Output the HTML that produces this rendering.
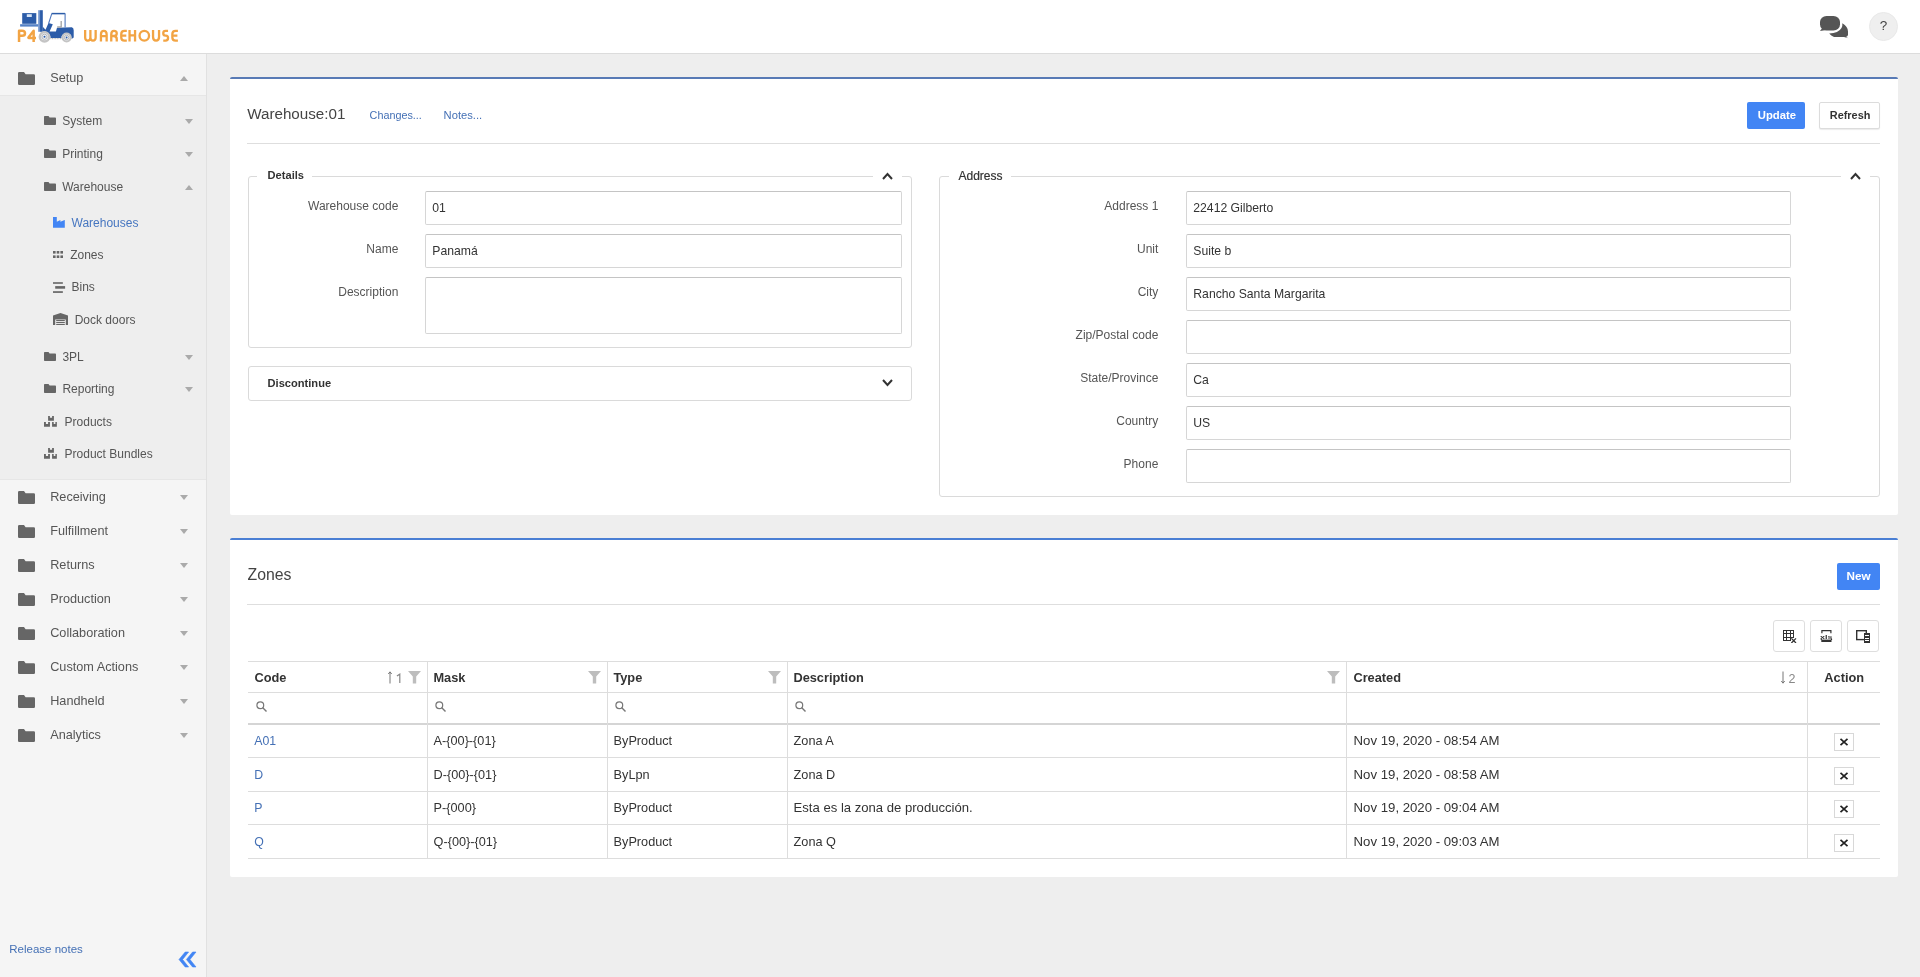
<!DOCTYPE html>
<html><head><meta charset="utf-8"><title>Warehouse</title>
<style>
*{box-sizing:border-box;margin:0;padding:0}
html,body{width:1920px;height:977px;overflow:hidden;background:#eeeeee;font-family:"Liberation Sans",sans-serif;color:#333;position:relative}
.a{position:absolute;display:block}
.t{position:absolute;white-space:nowrap;line-height:1}
</style></head><body style="will-change:transform">
<div class="a" style="left:0px;top:0px;width:1920px;height:53px;background:#fff"></div>
<div class="a" style="left:0px;top:53px;width:1920px;height:1px;background:#dcdcdc"></div>
<svg class="a" style="left:14px;top:8px;" width="170" height="40" viewBox="0 0 170 40">
<g fill="#2c5ca8">
<rect x="8.2" y="5.1" width="14.1" height="10.7"/>
<rect x="26" y="2.2" width="2.8" height="21.6"/>
<path d="M28.8 18.8 L31.5 21.8 L34.5 15.1 L38.8 16.2 L35.6 23.6 L41.9 23.6 L43 19.7 L57.8 19.2 Q59.7 19.6 59.7 22.2 L59.7 29.5 L57.6 31 L57 27 Q55 25 52.6 24.9 Q49 25 47.5 28.5 L47.5 30 L36.5 30 Q36.5 25 31.5 23.5 L28.8 23.5 Z"/>
</g>
<rect x="24.2" y="2.2" width="1.9" height="21.6" fill="#6f93cc"/>
<rect x="12.8" y="6.2" width="5" height="2.8" fill="#d6e4f6"/>
<rect x="6.1" y="16.2" width="18.1" height="2.4" fill="#5582c6"/>
<path d="M37.6 5.6 L51.2 5.6" stroke="#2c5ca8" stroke-width="1.5"/>
<path d="M37.8 5.6 L34.6 15.5 M51.1 5.6 L51.1 19.5" stroke="#4f78bd" stroke-width="1.1" fill="none"/>
<path d="M47.2 12.9 L47.2 19 L43.2 19" stroke="#a8a8a8" stroke-width="1.4" fill="none"/>
<path d="M36.4 30.6 L48.2 30.6" stroke="#c0c0c0" stroke-width="1.4" stroke-dasharray="1 0.6"/>
<circle cx="30.5" cy="28.8" r="5.9" fill="#c4c4c4"/><circle cx="30.5" cy="28.8" r="3.5" fill="#eef2f8"/><circle cx="30.5" cy="28.8" r="2.6" fill="none" stroke="#b0b0b0" stroke-width="0.9"/>
<circle cx="52.6" cy="29.5" r="5" fill="#c4c4c4"/><circle cx="52.6" cy="29.5" r="3" fill="#eef2f8"/><circle cx="52.6" cy="29.5" r="2.2" fill="none" stroke="#b0b0b0" stroke-width="0.9"/>
<circle cx="30.5" cy="28.8" r="1" fill="#2c5ca8"/><circle cx="52.6" cy="29.5" r="0.9" fill="#2c5ca8"/>
<g fill="none" stroke="#f2a444" stroke-width="2.5" stroke-linecap="butt" stroke-linejoin="round">
<path d="M5.05 34 V22.65 H8 Q11 22.65 11 25.2 Q11 27.8 8 27.8 H5.05"/>
<path d="M19.65 34 V22.65 L14.6 29.2 Q14 29.95 15 29.95 H22"/>
</g>
<g transform="translate(66,18)" fill="none" stroke="#f2a444" stroke-width="2.3" stroke-linejoin="round">
<path d="M5.15 3.95 V11.6 Q5.15 14.6 7.8 14.6 Q10.4 14.6 10.4 11.6 V3.95 M10.4 11.6 Q10.4 14.6 13 14.6 Q15.65 14.6 15.65 11.6 V3.95"/>
<path d="M20.95 15.55 V8.5 Q20.95 4.9 23.8 4.9 Q26.65 4.9 26.65 8.5 V15.55 M20.95 10.2 H26.65"/>
<path d="M31.25 15.55 V8.5 Q31.25 4.9 34 4.9 Q36.75 4.9 36.75 7.5 Q36.75 10 34 10 H31.25 M34.3 10 Q36.75 10.5 36.75 13 V15.55"/>
<path d="M46.8 4.9 H44.5 Q41.25 4.9 41.25 8 V11.5 Q41.25 14.6 44.5 14.6 H46.8 M41.25 9.7 H46.3"/>
<path d="M49.55 3.95 V15.55 M55.05 3.95 V15.55 M49.55 9.4 H55.05"/>
<ellipse cx="64.3" cy="9.75" rx="4.75" ry="4.85"/>
<path d="M73.05 3.95 V11 Q73.05 14.6 76.05 14.6 Q79.05 14.6 79.05 11 V3.95"/>
<path d="M88.05 4.9 H85.5 Q83.25 4.9 83.25 7.2 Q83.25 9.6 85.5 9.6 H86 Q88.05 9.6 88.05 12 Q88.05 14.6 85.5 14.6 H83.25"/>
<path d="M97.9 4.9 H95.6 Q92.35 4.9 92.35 8 V11.5 Q92.35 14.6 95.6 14.6 H97.9 M92.35 9.7 H97.4"/>
</g>
</svg>
<svg class="a" style="left:1819px;top:15px;" width="30" height="24" viewBox="0 0 30 24"><g fill="#555">
<rect x="1" y="1" width="20" height="14.6" rx="6.5" ry="6"/>
<path d="M1 16 L4 12 L7.5 15 Z"/>
<path d="M23.3 8.2 Q29 11.5 29 16.5 L29 20 Q28.5 21.5 27 22 L29.5 23.2 L25 22 Q23 22.2 20 22 L15 22 Q12 20.5 10.2 18.4 Q19.5 18.2 22.5 13 Q23.7 10.5 23.3 8.2 Z"/>
</g></svg>
<div class="a" style="left:1869px;top:12px;width:29px;height:29px;background:#efefef;border-radius:50%;border:1px solid #e9e9e9"></div>
<div class="t" style="left:1879.80px;top:18.97px;font-size:13.5px;color:#444;font-weight:normal;">?</div>
<div class="a" style="left:0px;top:54px;width:206px;height:923px;background:#f5f5f5"></div>
<div class="a" style="left:206px;top:54px;width:1px;height:923px;background:#e1e1e1"></div>
<div class="a" style="left:0px;top:95px;width:206px;height:1px;background:#e6e6e6"></div>
<div class="a" style="left:0px;top:96px;width:206px;height:383px;background:#eeeeee"></div>
<div class="a" style="left:0px;top:479px;width:206px;height:1px;background:#e6e6e6"></div>
<svg class="a" style="left:18px;top:72px;" width="17" height="13" viewBox="0 0 17 13"><path d="M0 1.2 Q0 0 1.2 0 L6 0 L7.6 2.2 L15.8 2.2 Q17 2.2 17 3.4 L17 11.8 Q17 13 15.8 13 L1.2 13 Q0 13 0 11.8 Z" fill="#666"/></svg>
<div class="t" style="left:50.20px;top:71.95px;font-size:12.7px;color:#555;font-weight:normal;">Setup</div>
<svg class="a" style="left:180px;top:76px;" width="8" height="5" viewBox="0 0 8 5"><path d="M0 5 L4.0 0 L8 5 Z" fill="#aaa"/></svg>
<svg class="a" style="left:44px;top:116.1px;" width="12" height="9" viewBox="0 0 12 9"><path d="M0 0.8 Q0 0 0.8 0 L4.5 0 L5.6 1.6 L11.2 1.6 Q12 1.6 12 2.4 L12 8.2 Q12 9 11.2 9 L0.8 9 Q0 9 0 8.2 Z" fill="#666"/></svg>
<div class="t" style="left:62.20px;top:114.94px;font-size:12px;color:#555;font-weight:normal;">System</div>
<svg class="a" style="left:185px;top:119.1px;" width="8" height="5" viewBox="0 0 8 5"><path d="M0 0 L8 0 L4.0 5 Z" fill="#aaa"/></svg>
<svg class="a" style="left:44px;top:149.2px;" width="12" height="9" viewBox="0 0 12 9"><path d="M0 0.8 Q0 0 0.8 0 L4.5 0 L5.6 1.6 L11.2 1.6 Q12 1.6 12 2.4 L12 8.2 Q12 9 11.2 9 L0.8 9 Q0 9 0 8.2 Z" fill="#666"/></svg>
<div class="t" style="left:62.20px;top:148.04px;font-size:12px;color:#555;font-weight:normal;">Printing</div>
<svg class="a" style="left:185px;top:152.2px;" width="8" height="5" viewBox="0 0 8 5"><path d="M0 0 L8 0 L4.0 5 Z" fill="#aaa"/></svg>
<svg class="a" style="left:44px;top:181.7px;" width="12" height="9" viewBox="0 0 12 9"><path d="M0 0.8 Q0 0 0.8 0 L4.5 0 L5.6 1.6 L11.2 1.6 Q12 1.6 12 2.4 L12 8.2 Q12 9 11.2 9 L0.8 9 Q0 9 0 8.2 Z" fill="#666"/></svg>
<div class="t" style="left:62.20px;top:180.54px;font-size:12px;color:#555;font-weight:normal;">Warehouse</div>
<svg class="a" style="left:185px;top:184.7px;" width="8" height="5" viewBox="0 0 8 5"><path d="M0 5 L4.0 0 L8 5 Z" fill="#aaa"/></svg>
<svg class="a" style="left:53px;top:217px;" width="12" height="11" viewBox="0 0 12 11"><path d="M0 0 H3.8 V4.8 L7.4 3 V4.8 L11.6 3 H11.8 V10.75 H0 Z" fill="#4285f4"/></svg>
<div class="t" style="left:71.50px;top:216.84px;font-size:12px;color:#4676c0;font-weight:normal;">Warehouses</div>
<svg class="a" style="left:53px;top:251px;" width="10" height="7" viewBox="0 0 10 7"><g fill="#666"><rect x="0" y="0" width="2.6" height="2.6"/><rect x="3.7" y="0" width="2.6" height="2.6"/><rect x="7.4" y="0" width="2.6" height="2.6"/><rect x="0" y="4.4" width="2.6" height="2.6"/><rect x="3.7" y="4.4" width="2.6" height="2.6"/><rect x="7.4" y="4.4" width="2.6" height="2.6"/></g></svg>
<div class="t" style="left:70.20px;top:248.74px;font-size:12px;color:#555;font-weight:normal;">Zones</div>
<svg class="a" style="left:53px;top:282px;" width="13" height="11" viewBox="0 0 13 11"><g fill="#666"><rect x="0" y="0.2" width="9.85" height="1.6"/><rect x="2.2" y="4.1" width="9.9" height="2.6"/><rect x="0" y="9.2" width="9.85" height="1.7"/></g></svg>
<div class="t" style="left:71.50px;top:281.44px;font-size:12px;color:#555;font-weight:normal;">Bins</div>
<svg class="a" style="left:53px;top:313px;" width="15" height="12" viewBox="0 0 15 12"><path d="M0 2.5 L7.5 0 L15 2.5 L15 12 L12.8 12 L12.8 6.4 L2.2 6.4 L2.2 12 L0 12 Z" fill="#666"/><g fill="#666"><rect x="3.2" y="7" width="8.6" height="1.1"/><rect x="3.2" y="9" width="8.6" height="1.1"/><rect x="3.2" y="11" width="8.6" height="1"/></g></svg>
<div class="t" style="left:74.70px;top:313.74px;font-size:12px;color:#555;font-weight:normal;">Dock doors</div>
<svg class="a" style="left:44px;top:351.8px;" width="12" height="9" viewBox="0 0 12 9"><path d="M0 0.8 Q0 0 0.8 0 L4.5 0 L5.6 1.6 L11.2 1.6 Q12 1.6 12 2.4 L12 8.2 Q12 9 11.2 9 L0.8 9 Q0 9 0 8.2 Z" fill="#666"/></svg>
<div class="t" style="left:62.40px;top:350.64px;font-size:12px;color:#555;font-weight:normal;">3PL</div>
<svg class="a" style="left:185px;top:354.8px;" width="8" height="5" viewBox="0 0 8 5"><path d="M0 0 L8 0 L4.0 5 Z" fill="#aaa"/></svg>
<svg class="a" style="left:44px;top:384.4px;" width="12" height="9" viewBox="0 0 12 9"><path d="M0 0.8 Q0 0 0.8 0 L4.5 0 L5.6 1.6 L11.2 1.6 Q12 1.6 12 2.4 L12 8.2 Q12 9 11.2 9 L0.8 9 Q0 9 0 8.2 Z" fill="#666"/></svg>
<div class="t" style="left:62.40px;top:383.24px;font-size:12px;color:#555;font-weight:normal;">Reporting</div>
<svg class="a" style="left:185px;top:387.4px;" width="8" height="5" viewBox="0 0 8 5"><path d="M0 0 L8 0 L4.0 5 Z" fill="#aaa"/></svg>
<svg class="a" style="left:44px;top:416.0px;" width="14" height="11" viewBox="0 0 14 11"><path fill="#666" d="M4.1 0 H5.9 V1.8 H8.1 V0 H9.9 V4.75 H4.1 Z M0 6 H1.9 V8 H4.1 V6 H5.95 V10.8 H0 Z M8.07 6 H9.7 V8 H11.4 V6 H12.86 V10.8 H8.07 Z"/></svg>
<div class="t" style="left:64.60px;top:415.74px;font-size:12px;color:#555;font-weight:normal;">Products</div>
<svg class="a" style="left:44px;top:447.90000000000003px;" width="14" height="11" viewBox="0 0 14 11"><path fill="#666" d="M4.1 0 H5.9 V1.8 H8.1 V0 H9.9 V4.75 H4.1 Z M0 6 H1.9 V8 H4.1 V6 H5.95 V10.8 H0 Z M8.07 6 H9.7 V8 H11.4 V6 H12.86 V10.8 H8.07 Z"/></svg>
<div class="t" style="left:64.60px;top:447.64px;font-size:12px;color:#555;font-weight:normal;">Product Bundles</div>
<svg class="a" style="left:18px;top:490.9px;" width="17" height="13" viewBox="0 0 17 13"><path d="M0 1.2 Q0 0 1.2 0 L6 0 L7.6 2.2 L15.8 2.2 Q17 2.2 17 3.4 L17 11.8 Q17 13 15.8 13 L1.2 13 Q0 13 0 11.8 Z" fill="#666"/></svg>
<div class="t" style="left:50.20px;top:490.75px;font-size:12.7px;color:#555;font-weight:normal;">Receiving</div>
<svg class="a" style="left:180px;top:495.2px;" width="8" height="5" viewBox="0 0 8 5"><path d="M0 0 L8 0 L4.0 5 Z" fill="#aaa"/></svg>
<svg class="a" style="left:18px;top:524.9000000000001px;" width="17" height="13" viewBox="0 0 17 13"><path d="M0 1.2 Q0 0 1.2 0 L6 0 L7.6 2.2 L15.8 2.2 Q17 2.2 17 3.4 L17 11.8 Q17 13 15.8 13 L1.2 13 Q0 13 0 11.8 Z" fill="#666"/></svg>
<div class="t" style="left:50.20px;top:524.75px;font-size:12.7px;color:#555;font-weight:normal;">Fulfillment</div>
<svg class="a" style="left:180px;top:529.2px;" width="8" height="5" viewBox="0 0 8 5"><path d="M0 0 L8 0 L4.0 5 Z" fill="#aaa"/></svg>
<svg class="a" style="left:18px;top:558.9000000000001px;" width="17" height="13" viewBox="0 0 17 13"><path d="M0 1.2 Q0 0 1.2 0 L6 0 L7.6 2.2 L15.8 2.2 Q17 2.2 17 3.4 L17 11.8 Q17 13 15.8 13 L1.2 13 Q0 13 0 11.8 Z" fill="#666"/></svg>
<div class="t" style="left:50.20px;top:558.75px;font-size:12.7px;color:#555;font-weight:normal;">Returns</div>
<svg class="a" style="left:180px;top:563.2px;" width="8" height="5" viewBox="0 0 8 5"><path d="M0 0 L8 0 L4.0 5 Z" fill="#aaa"/></svg>
<svg class="a" style="left:18px;top:592.9000000000001px;" width="17" height="13" viewBox="0 0 17 13"><path d="M0 1.2 Q0 0 1.2 0 L6 0 L7.6 2.2 L15.8 2.2 Q17 2.2 17 3.4 L17 11.8 Q17 13 15.8 13 L1.2 13 Q0 13 0 11.8 Z" fill="#666"/></svg>
<div class="t" style="left:50.20px;top:592.75px;font-size:12.7px;color:#555;font-weight:normal;">Production</div>
<svg class="a" style="left:180px;top:597.2px;" width="8" height="5" viewBox="0 0 8 5"><path d="M0 0 L8 0 L4.0 5 Z" fill="#aaa"/></svg>
<svg class="a" style="left:18px;top:626.9000000000001px;" width="17" height="13" viewBox="0 0 17 13"><path d="M0 1.2 Q0 0 1.2 0 L6 0 L7.6 2.2 L15.8 2.2 Q17 2.2 17 3.4 L17 11.8 Q17 13 15.8 13 L1.2 13 Q0 13 0 11.8 Z" fill="#666"/></svg>
<div class="t" style="left:50.20px;top:626.75px;font-size:12.7px;color:#555;font-weight:normal;">Collaboration</div>
<svg class="a" style="left:180px;top:631.2px;" width="8" height="5" viewBox="0 0 8 5"><path d="M0 0 L8 0 L4.0 5 Z" fill="#aaa"/></svg>
<svg class="a" style="left:18px;top:660.9000000000001px;" width="17" height="13" viewBox="0 0 17 13"><path d="M0 1.2 Q0 0 1.2 0 L6 0 L7.6 2.2 L15.8 2.2 Q17 2.2 17 3.4 L17 11.8 Q17 13 15.8 13 L1.2 13 Q0 13 0 11.8 Z" fill="#666"/></svg>
<div class="t" style="left:50.20px;top:660.75px;font-size:12.7px;color:#555;font-weight:normal;">Custom Actions</div>
<svg class="a" style="left:180px;top:665.2px;" width="8" height="5" viewBox="0 0 8 5"><path d="M0 0 L8 0 L4.0 5 Z" fill="#aaa"/></svg>
<svg class="a" style="left:18px;top:694.9000000000001px;" width="17" height="13" viewBox="0 0 17 13"><path d="M0 1.2 Q0 0 1.2 0 L6 0 L7.6 2.2 L15.8 2.2 Q17 2.2 17 3.4 L17 11.8 Q17 13 15.8 13 L1.2 13 Q0 13 0 11.8 Z" fill="#666"/></svg>
<div class="t" style="left:50.20px;top:694.75px;font-size:12.7px;color:#555;font-weight:normal;">Handheld</div>
<svg class="a" style="left:180px;top:699.2px;" width="8" height="5" viewBox="0 0 8 5"><path d="M0 0 L8 0 L4.0 5 Z" fill="#aaa"/></svg>
<svg class="a" style="left:18px;top:728.9000000000001px;" width="17" height="13" viewBox="0 0 17 13"><path d="M0 1.2 Q0 0 1.2 0 L6 0 L7.6 2.2 L15.8 2.2 Q17 2.2 17 3.4 L17 11.8 Q17 13 15.8 13 L1.2 13 Q0 13 0 11.8 Z" fill="#666"/></svg>
<div class="t" style="left:50.20px;top:728.75px;font-size:12.7px;color:#555;font-weight:normal;">Analytics</div>
<svg class="a" style="left:180px;top:733.2px;" width="8" height="5" viewBox="0 0 8 5"><path d="M0 0 L8 0 L4.0 5 Z" fill="#aaa"/></svg>
<div class="t" style="left:9.30px;top:943.86px;font-size:11.5px;color:#4470b5;font-weight:normal;">Release notes</div>
<svg class="a" style="left:178px;top:951px;" width="21" height="17" viewBox="0 0 21 17"><path d="M7.2 1 L1 8.5 L7.2 16 L10.6 16 L4.6 8.5 L10.6 1 Z M14.6 1 L8.4 8.5 L14.6 16 L18 16 L12 8.5 L18 1 Z" fill="#4285f4" stroke="#4285f4" stroke-width="0.6" stroke-linejoin="round"/></svg>
<div class="a" style="left:230px;top:77px;width:1668px;height:438px;background:#fff;border-top:2px solid #587ab5;border-radius:2px"></div>
<div class="t" style="left:247.20px;top:105.93px;font-size:15.2px;color:#444;font-weight:normal;">Warehouse:01</div>
<div class="t" style="left:369.60px;top:109.66px;font-size:10.8px;color:#4470b5;font-weight:normal;">Changes...</div>
<div class="t" style="left:443.60px;top:110.02px;font-size:11.2px;color:#4470b5;font-weight:normal;">Notes...</div>
<div class="a" style="left:1747px;top:102px;width:58px;height:27px;background:#4285f4;border-radius:2px"></div>
<div class="t" style="left:1757.80px;top:109.73px;font-size:11.3px;color:#fff;font-weight:bold;">Update</div>
<div class="a" style="left:1819px;top:102px;width:61px;height:27px;background:#fff;border:1px solid #dcdcdc;border-radius:2px;box-shadow:0 1px 1px rgba(0,0,0,.08)"></div>
<div class="t" style="left:1829.80px;top:109.57px;font-size:10.9px;color:#333;font-weight:bold;">Refresh</div>
<div class="a" style="left:247px;top:143px;width:1633px;height:1px;background:#dedede"></div>
<div class="a" style="left:248px;top:176px;width:664px;height:172px;border:1px solid #dadada;border-radius:3px"></div>
<div class="a" style="left:257px;top:175px;width:55px;height:3px;background:#fff"></div>
<div class="a" style="left:873px;top:175px;width:29px;height:3px;background:#fff"></div>
<div class="t" style="left:267.60px;top:170.40px;font-size:11.1px;color:#333;font-weight:bold;">Details</div>
<svg class="a" style="left:882px;top:172px;" width="11" height="9" viewBox="0 0 11 9"><path d="M1 7 L5.5 2 L10 7" fill="none" stroke="#333" stroke-width="2"/></svg>
<div class="t" style="right:1521.70px;top:199.84px;font-size:12px;color:#555">Warehouse code</div>
<div class="a" style="left:425px;top:191px;width:477px;height:34px;background:#fff;border:1px solid #d6d6d6;border-top-color:#c4c4c4;border-radius:2px"></div>
<div class="t" style="left:432.30px;top:201.57px;font-size:12.2px;color:#333;font-weight:normal;">01</div>
<div class="t" style="right:1521.70px;top:242.54px;font-size:12px;color:#555">Name</div>
<div class="a" style="left:425px;top:234px;width:477px;height:34px;background:#fff;border:1px solid #d6d6d6;border-top-color:#c4c4c4;border-radius:2px"></div>
<div class="t" style="left:432.30px;top:244.57px;font-size:12.2px;color:#333;font-weight:normal;">Panamá</div>
<div class="t" style="right:1521.70px;top:285.84px;font-size:12px;color:#555">Description</div>
<div class="a" style="left:425px;top:277px;width:477px;height:57px;background:#fff;border:1px solid #d6d6d6;border-top-color:#c4c4c4;border-radius:2px"></div>
<div class="a" style="left:248px;top:366px;width:664px;height:35px;border:1px solid #dadada;border-radius:3px"></div>
<div class="t" style="left:267.60px;top:378.20px;font-size:11.1px;color:#333;font-weight:bold;">Discontinue</div>
<svg class="a" style="left:882px;top:377.5px;" width="11" height="9" viewBox="0 0 11 9"><path d="M1 2 L5.5 7 L10 2" fill="none" stroke="#333" stroke-width="2"/></svg>
<div class="a" style="left:939px;top:176px;width:941px;height:321px;border:1px solid #dadada;border-radius:3px"></div>
<div class="a" style="left:949px;top:175px;width:62px;height:3px;background:#fff"></div>
<div class="a" style="left:1841px;top:175px;width:29px;height:3px;background:#fff"></div>
<div class="t" style="left:958.50px;top:169.84px;font-size:12px;color:#333;font-weight:normal;-webkit-text-stroke:0.2px #333">Address</div>
<svg class="a" style="left:1850px;top:172px;" width="11" height="9" viewBox="0 0 11 9"><path d="M1 7 L5.5 2 L10 7" fill="none" stroke="#333" stroke-width="2"/></svg>
<div class="t" style="right:761.70px;top:199.84px;font-size:12px;color:#555">Address 1</div>
<div class="a" style="left:1186px;top:191px;width:605px;height:34px;background:#fff;border:1px solid #d6d6d6;border-top-color:#c4c4c4;border-radius:2px"></div>
<div class="t" style="left:1193.30px;top:201.57px;font-size:12.2px;color:#333;font-weight:normal;">22412 Gilberto</div>
<div class="t" style="right:761.70px;top:242.84px;font-size:12px;color:#555">Unit</div>
<div class="a" style="left:1186px;top:234px;width:605px;height:34px;background:#fff;border:1px solid #d6d6d6;border-top-color:#c4c4c4;border-radius:2px"></div>
<div class="t" style="left:1193.30px;top:244.57px;font-size:12.2px;color:#333;font-weight:normal;">Suite b</div>
<div class="t" style="right:761.70px;top:285.84px;font-size:12px;color:#555">City</div>
<div class="a" style="left:1186px;top:277px;width:605px;height:34px;background:#fff;border:1px solid #d6d6d6;border-top-color:#c4c4c4;border-radius:2px"></div>
<div class="t" style="left:1193.30px;top:287.57px;font-size:12.2px;color:#333;font-weight:normal;">Rancho Santa Margarita</div>
<div class="t" style="right:761.70px;top:328.84px;font-size:12px;color:#555">Zip/Postal code</div>
<div class="a" style="left:1186px;top:320px;width:605px;height:34px;background:#fff;border:1px solid #d6d6d6;border-top-color:#c4c4c4;border-radius:2px"></div>
<div class="t" style="right:761.70px;top:371.84px;font-size:12px;color:#555">State/Province</div>
<div class="a" style="left:1186px;top:363px;width:605px;height:34px;background:#fff;border:1px solid #d6d6d6;border-top-color:#c4c4c4;border-radius:2px"></div>
<div class="t" style="left:1193.30px;top:373.57px;font-size:12.2px;color:#333;font-weight:normal;">Ca</div>
<div class="t" style="right:761.70px;top:414.84px;font-size:12px;color:#555">Country</div>
<div class="a" style="left:1186px;top:406px;width:605px;height:34px;background:#fff;border:1px solid #d6d6d6;border-top-color:#c4c4c4;border-radius:2px"></div>
<div class="t" style="left:1193.30px;top:416.57px;font-size:12.2px;color:#333;font-weight:normal;">US</div>
<div class="t" style="right:761.70px;top:457.84px;font-size:12px;color:#555">Phone</div>
<div class="a" style="left:1186px;top:449px;width:605px;height:34px;background:#fff;border:1px solid #d6d6d6;border-top-color:#c4c4c4;border-radius:2px"></div>
<div class="a" style="left:230px;top:538px;width:1668px;height:339px;background:#fff;border-top:2px solid #4a7fd4;border-radius:2px"></div>
<div class="t" style="left:247.50px;top:566.72px;font-size:15.8px;color:#444;font-weight:normal;">Zones</div>
<div class="a" style="left:1837px;top:563px;width:43px;height:27px;background:#4285f4;border-radius:2px"></div>
<div class="t" style="left:1846.60px;top:570.09px;font-size:11.7px;color:#fff;font-weight:bold;">New</div>
<div class="a" style="left:247px;top:604px;width:1633px;height:1px;background:#dedede"></div>
<div class="a" style="left:1773px;top:620px;width:32px;height:32px;background:#fff;border:1px solid #dedede;border-radius:3px"></div>
<div class="a" style="left:1810px;top:620px;width:32px;height:32px;background:#fff;border:1px solid #dedede;border-radius:3px"></div>
<div class="a" style="left:1847px;top:620px;width:32px;height:32px;background:#fff;border:1px solid #dedede;border-radius:3px"></div>
<svg class="a" style="left:1783px;top:630px;" width="14" height="13" viewBox="0 0 14 13"><g stroke="#333" stroke-width="1" fill="none"><path d="M0.5 0 V11 M3.5 0 V11 M7.5 0 V11 M10.5 0 V7.6 M0 0.5 H11 M0 3.5 H11 M0 7.5 H11 M0 10.5 H7.6"/></g><path d="M8.4 8.4 L13 13 M13 8.4 L8.4 13" stroke="#333" stroke-width="1.3"/></svg>
<svg class="a" style="left:1820px;top:630px;" width="13" height="13" viewBox="0 0 13 13"><g fill="none" stroke="#333" stroke-width="1.2"><path d="M1.9 3.2 V0.6 H10.9 V3.2"/></g><rect x="1.3" y="9.6" width="10.2" height="2.4" fill="#333"/><path d="M1.3 9 V10 M11.5 9 V10" stroke="#333" stroke-width="1.2"/><text x="0" y="8.9" font-family="Liberation Sans" font-size="5.8" fill="#333" font-weight="bold" textLength="12.5" lengthAdjust="spacingAndGlyphs">xls</text></svg>
<svg class="a" style="left:1856px;top:630px;" width="14" height="13" viewBox="0 0 14 13"><rect x="0.7" y="0.7" width="9.6" height="8.9" fill="none" stroke="#333" stroke-width="1.4"/><rect x="8" y="3" width="6" height="10" fill="#333"/><g fill="#fff"><rect x="9" y="5" width="4" height="1"/><rect x="9" y="8" width="4" height="1"/><rect x="9" y="10" width="4" height="1"/></g></svg>
<div class="a" style="left:248px;top:661px;width:1632px;height:1px;background:#dddddd"></div>
<div class="a" style="left:248px;top:692px;width:1632px;height:1px;background:#dddddd"></div>
<div class="a" style="left:248px;top:723px;width:1632px;height:2px;background:#d5d5d5"></div>
<div class="a" style="left:248px;top:757px;width:1632px;height:1px;background:#dddddd"></div>
<div class="a" style="left:248px;top:791px;width:1632px;height:1px;background:#dddddd"></div>
<div class="a" style="left:248px;top:824px;width:1632px;height:1px;background:#dddddd"></div>
<div class="a" style="left:248px;top:858px;width:1632px;height:1px;background:#dddddd"></div>
<div class="a" style="left:427px;top:661px;width:1px;height:197px;background:#dddddd"></div>
<div class="a" style="left:607px;top:661px;width:1px;height:197px;background:#dddddd"></div>
<div class="a" style="left:787px;top:661px;width:1px;height:197px;background:#dddddd"></div>
<div class="a" style="left:1346px;top:661px;width:1px;height:197px;background:#dddddd"></div>
<div class="a" style="left:1807px;top:661px;width:1px;height:197px;background:#dddddd"></div>
<div class="t" style="left:254.40px;top:671.66px;font-size:12.8px;color:#333;font-weight:bold;">Code</div>
<div class="t" style="left:433.40px;top:671.66px;font-size:12.8px;color:#333;font-weight:bold;">Mask</div>
<div class="t" style="left:613.40px;top:671.66px;font-size:12.8px;color:#333;font-weight:bold;">Type</div>
<div class="t" style="left:793.40px;top:671.66px;font-size:12.8px;color:#333;font-weight:bold;">Description</div>
<div class="t" style="left:1353.40px;top:671.66px;font-size:12.8px;color:#333;font-weight:bold;">Created</div>
<div class="t" style="left:1824.30px;top:671.66px;font-size:12.8px;color:#333;font-weight:bold;">Action</div>
<svg class="a" style="left:408px;top:671px;" width="13" height="13" viewBox="0 0 13 13"><path d="M0 0 H13 L8.2 5.5 V12.5 H4.8 V5.5 Z" fill="#bdbdbd"/></svg>
<svg class="a" style="left:588px;top:671px;" width="13" height="13" viewBox="0 0 13 13"><path d="M0 0 H13 L8.2 5.5 V12.5 H4.8 V5.5 Z" fill="#bdbdbd"/></svg>
<svg class="a" style="left:768px;top:671px;" width="13" height="13" viewBox="0 0 13 13"><path d="M0 0 H13 L8.2 5.5 V12.5 H4.8 V5.5 Z" fill="#bdbdbd"/></svg>
<svg class="a" style="left:1327px;top:671px;" width="13" height="13" viewBox="0 0 13 13"><path d="M0 0 H13 L8.2 5.5 V12.5 H4.8 V5.5 Z" fill="#bdbdbd"/></svg>
<svg class="a" style="left:388px;top:671px;" width="4" height="13" viewBox="0 0 4 13"><path d="M2 1 V12.5 M0.3 3 L2 0.8 L3.7 3" stroke="#777" stroke-width="1" fill="none"/></svg>
<svg class="a" style="left:396px;top:673px;" width="6" height="12" viewBox="0 0 6 12"><path d="M0.9 3 L3.8 1.2 V10" stroke="#888" stroke-width="1.2" fill="none"/></svg>
<svg class="a" style="left:1781px;top:671px;" width="4" height="13" viewBox="0 0 4 13"><path d="M2 0.5 V12 M0.3 10 L2 12.2 L3.7 10" stroke="#777" stroke-width="1" fill="none"/></svg>
<div class="t" style="left:1788.40px;top:672.82px;font-size:12.5px;color:#888;font-weight:normal;">2</div>
<svg class="a" style="left:256px;top:701px;" width="11" height="11" viewBox="0 0 11 11"><circle cx="4.3" cy="4.3" r="3.4" fill="none" stroke="#777" stroke-width="1.2"/><path d="M6.8 6.8 L10.5 10.5" stroke="#777" stroke-width="1.4"/></svg>
<svg class="a" style="left:435px;top:701px;" width="11" height="11" viewBox="0 0 11 11"><circle cx="4.3" cy="4.3" r="3.4" fill="none" stroke="#777" stroke-width="1.2"/><path d="M6.8 6.8 L10.5 10.5" stroke="#777" stroke-width="1.4"/></svg>
<svg class="a" style="left:615px;top:701px;" width="11" height="11" viewBox="0 0 11 11"><circle cx="4.3" cy="4.3" r="3.4" fill="none" stroke="#777" stroke-width="1.2"/><path d="M6.8 6.8 L10.5 10.5" stroke="#777" stroke-width="1.4"/></svg>
<svg class="a" style="left:795px;top:701px;" width="11" height="11" viewBox="0 0 11 11"><circle cx="4.3" cy="4.3" r="3.4" fill="none" stroke="#777" stroke-width="1.2"/><path d="M6.8 6.8 L10.5 10.5" stroke="#777" stroke-width="1.4"/></svg>
<div class="t" style="left:254.20px;top:734.59px;font-size:12.3px;color:#4470b5;font-weight:normal;">A01</div>
<div class="t" style="left:433.60px;top:734.85px;font-size:12.7px;color:#333;font-weight:normal;">A-{00}-{01}</div>
<div class="t" style="left:613.60px;top:734.85px;font-size:12.7px;color:#333;font-weight:normal;">ByProduct</div>
<div class="t" style="left:793.60px;top:734.85px;font-size:12.7px;color:#333;font-weight:normal;">Zona A</div>
<div class="t" style="left:1353.60px;top:733.82px;font-size:13.2px;color:#333;font-weight:normal;">Nov 19, 2020 - 08:54 AM</div>
<div class="a" style="left:1834px;top:733px;width:20px;height:18px;background:#fff;border:1px solid #d8d8d8"></div>
<svg class="a" style="left:1839px;top:738px;" width="10" height="8" viewBox="0 0 10 8"><path d="M1.5 0.8 L8.5 7.2 M8.5 0.8 L1.5 7.2" stroke="#222" stroke-width="1.7"/></svg>
<div class="t" style="left:254.20px;top:768.59px;font-size:12.3px;color:#4470b5;font-weight:normal;">D</div>
<div class="t" style="left:433.60px;top:768.85px;font-size:12.7px;color:#333;font-weight:normal;">D-{00}-{01}</div>
<div class="t" style="left:613.60px;top:768.85px;font-size:12.7px;color:#333;font-weight:normal;">ByLpn</div>
<div class="t" style="left:793.60px;top:768.85px;font-size:12.7px;color:#333;font-weight:normal;">Zona D</div>
<div class="t" style="left:1353.60px;top:767.82px;font-size:13.2px;color:#333;font-weight:normal;">Nov 19, 2020 - 08:58 AM</div>
<div class="a" style="left:1834px;top:767px;width:20px;height:18px;background:#fff;border:1px solid #d8d8d8"></div>
<svg class="a" style="left:1839px;top:772px;" width="10" height="8" viewBox="0 0 10 8"><path d="M1.5 0.8 L8.5 7.2 M8.5 0.8 L1.5 7.2" stroke="#222" stroke-width="1.7"/></svg>
<div class="t" style="left:254.20px;top:801.59px;font-size:12.3px;color:#4470b5;font-weight:normal;">P</div>
<div class="t" style="left:433.60px;top:801.85px;font-size:12.7px;color:#333;font-weight:normal;">P-{000}</div>
<div class="t" style="left:613.60px;top:801.85px;font-size:12.7px;color:#333;font-weight:normal;">ByProduct</div>
<div class="t" style="left:793.60px;top:800.91px;font-size:13.1px;color:#333;font-weight:normal;">Esta es la zona de producción.</div>
<div class="t" style="left:1353.60px;top:800.82px;font-size:13.2px;color:#333;font-weight:normal;">Nov 19, 2020 - 09:04 AM</div>
<div class="a" style="left:1834px;top:800px;width:20px;height:18px;background:#fff;border:1px solid #d8d8d8"></div>
<svg class="a" style="left:1839px;top:805px;" width="10" height="8" viewBox="0 0 10 8"><path d="M1.5 0.8 L8.5 7.2 M8.5 0.8 L1.5 7.2" stroke="#222" stroke-width="1.7"/></svg>
<div class="t" style="left:254.20px;top:835.59px;font-size:12.3px;color:#4470b5;font-weight:normal;">Q</div>
<div class="t" style="left:433.60px;top:835.85px;font-size:12.7px;color:#333;font-weight:normal;">Q-{00}-{01}</div>
<div class="t" style="left:613.60px;top:835.85px;font-size:12.7px;color:#333;font-weight:normal;">ByProduct</div>
<div class="t" style="left:793.60px;top:835.85px;font-size:12.7px;color:#333;font-weight:normal;">Zona Q</div>
<div class="t" style="left:1353.60px;top:834.82px;font-size:13.2px;color:#333;font-weight:normal;">Nov 19, 2020 - 09:03 AM</div>
<div class="a" style="left:1834px;top:834px;width:20px;height:18px;background:#fff;border:1px solid #d8d8d8"></div>
<svg class="a" style="left:1839px;top:839px;" width="10" height="8" viewBox="0 0 10 8"><path d="M1.5 0.8 L8.5 7.2 M8.5 0.8 L1.5 7.2" stroke="#222" stroke-width="1.7"/></svg>
</body></html>
